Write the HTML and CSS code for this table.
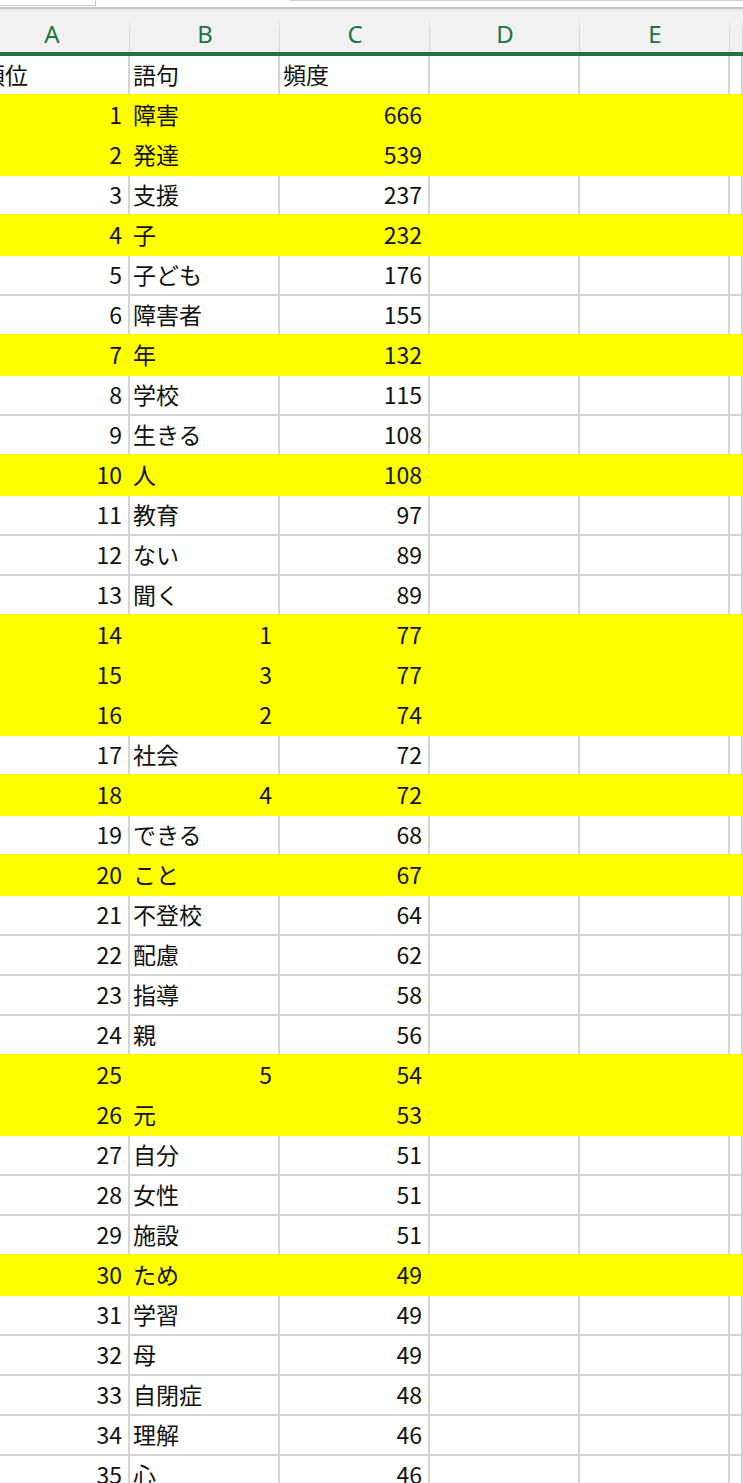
FILE: index.html
```html
<!DOCTYPE html>
<html lang="ja">
<head>
<meta charset="utf-8">
<title>Sheet</title>
<link rel="stylesheet" href="styles.css">
</head>
<body>
<div class="topbar">
  <div class="namebox"></div>
  <div class="spacer"></div>
  <div class="formula"></div>
</div>
<div class="colheads">
  <div class="ch ch-a">A</div>
  <div class="ch">B</div>
  <div class="ch">C</div>
  <div class="ch">D</div>
  <div class="ch">E</div>
  <div class="ch"></div>
</div>
<div class="sheet">
  <div class="row"><div class="cell">順位</div><div class="cell">語句</div><div class="cell">頻度</div><div class="cell"></div><div class="cell"></div><div class="cell"></div></div>
  <div class="row hl"><div class="cell num">1</div><div class="cell">障害</div><div class="cell num">666</div><div class="cell"></div><div class="cell"></div><div class="cell"></div></div>
  <div class="row hl"><div class="cell num">2</div><div class="cell">発達</div><div class="cell num">539</div><div class="cell"></div><div class="cell"></div><div class="cell"></div></div>
  <div class="row"><div class="cell num">3</div><div class="cell">支援</div><div class="cell num">237</div><div class="cell"></div><div class="cell"></div><div class="cell"></div></div>
  <div class="row hl"><div class="cell num">4</div><div class="cell">子</div><div class="cell num">232</div><div class="cell"></div><div class="cell"></div><div class="cell"></div></div>
  <div class="row"><div class="cell num">5</div><div class="cell">子ども</div><div class="cell num">176</div><div class="cell"></div><div class="cell"></div><div class="cell"></div></div>
  <div class="row"><div class="cell num">6</div><div class="cell">障害者</div><div class="cell num">155</div><div class="cell"></div><div class="cell"></div><div class="cell"></div></div>
  <div class="row hl"><div class="cell num">7</div><div class="cell">年</div><div class="cell num">132</div><div class="cell"></div><div class="cell"></div><div class="cell"></div></div>
  <div class="row"><div class="cell num">8</div><div class="cell">学校</div><div class="cell num">115</div><div class="cell"></div><div class="cell"></div><div class="cell"></div></div>
  <div class="row"><div class="cell num">9</div><div class="cell">生きる</div><div class="cell num">108</div><div class="cell"></div><div class="cell"></div><div class="cell"></div></div>
  <div class="row hl"><div class="cell num">10</div><div class="cell">人</div><div class="cell num">108</div><div class="cell"></div><div class="cell"></div><div class="cell"></div></div>
  <div class="row"><div class="cell num">11</div><div class="cell">教育</div><div class="cell num">97</div><div class="cell"></div><div class="cell"></div><div class="cell"></div></div>
  <div class="row"><div class="cell num">12</div><div class="cell">ない</div><div class="cell num">89</div><div class="cell"></div><div class="cell"></div><div class="cell"></div></div>
  <div class="row"><div class="cell num">13</div><div class="cell">聞く</div><div class="cell num">89</div><div class="cell"></div><div class="cell"></div><div class="cell"></div></div>
  <div class="row hl"><div class="cell num">14</div><div class="cell num">1</div><div class="cell num">77</div><div class="cell"></div><div class="cell"></div><div class="cell"></div></div>
  <div class="row hl"><div class="cell num">15</div><div class="cell num">3</div><div class="cell num">77</div><div class="cell"></div><div class="cell"></div><div class="cell"></div></div>
  <div class="row hl"><div class="cell num">16</div><div class="cell num">2</div><div class="cell num">74</div><div class="cell"></div><div class="cell"></div><div class="cell"></div></div>
  <div class="row"><div class="cell num">17</div><div class="cell">社会</div><div class="cell num">72</div><div class="cell"></div><div class="cell"></div><div class="cell"></div></div>
  <div class="row hl"><div class="cell num">18</div><div class="cell num">4</div><div class="cell num">72</div><div class="cell"></div><div class="cell"></div><div class="cell"></div></div>
  <div class="row"><div class="cell num">19</div><div class="cell">できる</div><div class="cell num">68</div><div class="cell"></div><div class="cell"></div><div class="cell"></div></div>
  <div class="row hl"><div class="cell num">20</div><div class="cell">こと</div><div class="cell num">67</div><div class="cell"></div><div class="cell"></div><div class="cell"></div></div>
  <div class="row"><div class="cell num">21</div><div class="cell">不登校</div><div class="cell num">64</div><div class="cell"></div><div class="cell"></div><div class="cell"></div></div>
  <div class="row"><div class="cell num">22</div><div class="cell">配慮</div><div class="cell num">62</div><div class="cell"></div><div class="cell"></div><div class="cell"></div></div>
  <div class="row"><div class="cell num">23</div><div class="cell">指導</div><div class="cell num">58</div><div class="cell"></div><div class="cell"></div><div class="cell"></div></div>
  <div class="row"><div class="cell num">24</div><div class="cell">親</div><div class="cell num">56</div><div class="cell"></div><div class="cell"></div><div class="cell"></div></div>
  <div class="row hl"><div class="cell num">25</div><div class="cell num">5</div><div class="cell num">54</div><div class="cell"></div><div class="cell"></div><div class="cell"></div></div>
  <div class="row hl"><div class="cell num">26</div><div class="cell">元</div><div class="cell num">53</div><div class="cell"></div><div class="cell"></div><div class="cell"></div></div>
  <div class="row"><div class="cell num">27</div><div class="cell">自分</div><div class="cell num">51</div><div class="cell"></div><div class="cell"></div><div class="cell"></div></div>
  <div class="row"><div class="cell num">28</div><div class="cell">女性</div><div class="cell num">51</div><div class="cell"></div><div class="cell"></div><div class="cell"></div></div>
  <div class="row"><div class="cell num">29</div><div class="cell">施設</div><div class="cell num">51</div><div class="cell"></div><div class="cell"></div><div class="cell"></div></div>
  <div class="row hl"><div class="cell num">30</div><div class="cell">ため</div><div class="cell num">49</div><div class="cell"></div><div class="cell"></div><div class="cell"></div></div>
  <div class="row"><div class="cell num">31</div><div class="cell">学習</div><div class="cell num">49</div><div class="cell"></div><div class="cell"></div><div class="cell"></div></div>
  <div class="row"><div class="cell num">32</div><div class="cell">母</div><div class="cell num">49</div><div class="cell"></div><div class="cell"></div><div class="cell"></div></div>
  <div class="row"><div class="cell num">33</div><div class="cell">自閉症</div><div class="cell num">48</div><div class="cell"></div><div class="cell"></div><div class="cell"></div></div>
  <div class="row"><div class="cell num">34</div><div class="cell">理解</div><div class="cell num">46</div><div class="cell"></div><div class="cell"></div><div class="cell"></div></div>
  <div class="row"><div class="cell num">35</div><div class="cell">心</div><div class="cell num">46</div><div class="cell"></div><div class="cell"></div><div class="cell"></div></div>
</div>
</body>
</html>
```

FILE: styles.css
```css
html, body {
  margin: 0;
  padding: 0;
  background: #ffffff;
}
body {
  height: 1483px;
  overflow: hidden;
  font-family: "Noto Sans CJK JP", "Noto Sans", sans-serif;
  color: #111111;
}

/* top strip (name box + formula bar edge) */
.topbar {
  display: flex;
  height: 7px;
  border-bottom: 2px solid #c4c4c4;
}
.namebox {
  width: 95px;
  height: 5px;
  border-right: 1px solid #c8c8c8;
  border-bottom: 1px solid #c8c8c8;
  background: #ffffff;
}
.spacer {
  width: 194px;
}
.formula {
  flex: 1;
  height: 6px;
  border-top: 1px solid #d2d2d2;
}

/* column letters */
.colheads {
  display: grid;
  grid-template-columns: 130px repeat(4, 150px) 1fr;
  height: 41px;
  border-top: 2px solid #e6e6e6;
  border-bottom: 4px solid #217346;
  background: #f1f1f1;
}
.ch {
  position: relative;
  display: flex;
  align-items: center;
  justify-content: center;
  padding-top: 4px;
  font-family: "Noto Sans", "Liberation Sans", sans-serif;
  font-size: 24px;
  color: #217346;
}
.ch-a {
  padding-right: 26px;
}
.ch::after {
  content: "";
  position: absolute;
  right: 0;
  top: 6px;
  bottom: 0;
  width: 1px;
  background: linear-gradient(#f1f1f1, #d6d6d6 40%, #d6d6d6);
}

/* grid */
.row {
  display: grid;
  grid-template-columns: 130px repeat(4, 150px) 1fr;
  height: 40px;
}
.cell {
  display: flex;
  align-items: center;
  padding: 0 6px 2px 3px;
  border-right: 2px solid #d4d4d4;
  border-bottom: 2px solid #d4d4d4;
  font-size: 23px;
  line-height: 1;
  white-space: nowrap;
  overflow: hidden;
}
.row .cell:first-child {
  overflow: visible;
}
.row:first-child .cell:first-child {
  margin-left: -22px;
  padding-left: 4px;
}
.num {
  justify-content: flex-end;
}

.row.hl .cell {
  background: #ffff00;
  border-color: #ffff00;
  box-shadow: 0 -2px 0 #ffff00;
}
```
